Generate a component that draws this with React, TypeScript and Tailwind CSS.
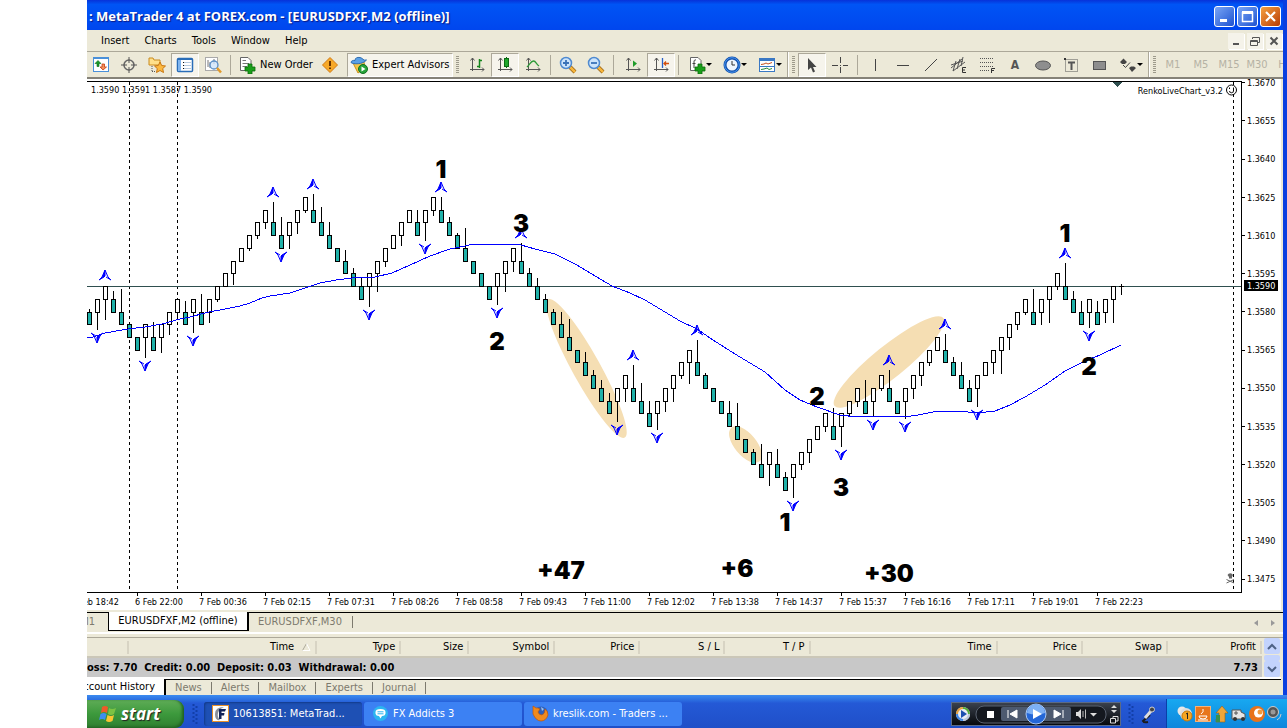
import type { ReactNode } from "react";
import clsx from "clsx";

type Candle = [dir: "u" | "d", top: number, wick?: number];

// dir, level of the body's upper edge (5 pip steps from 1.3590), tip of the wick
const candles: Candle[] = [
  ["d", -2, 309], ["u", -1, 330], ["u", 0, 320], ["d", -1, 291], ["d", -2, 289], ["d", -3], ["d", -4],
  ["u", -3, 358], ["d", -4, 322], ["u", -3, 353], ["u", -2, 335], ["u", -1, 320], ["d", -2, 301],
  ["u", -1, 333], ["d", -2, 294], ["u", -1, 323], ["u", 0, 302], ["u", 1], ["u", 2, 285], ["u", 3],
  ["u", 4, 251], ["u", 5, 239], ["u", 6, 229], ["d", 5, 202], ["d", 4, 217], ["u", 5, 249], ["u", 6, 234],
  ["u", 7, 213], ["d", 6, 194], ["d", 5, 207], ["d", 4, 222], ["d", 3], ["d", 2, 250], ["d", 1, 268],
  ["d", 0, 278], ["u", 1, 307], ["u", 2, 292], ["u", 3, 267], ["u", 4], ["u", 5, 246], ["u", 6],
  ["d", 5, 210], ["u", 6, 241], ["u", 7, 216], ["d", 6, 197], ["d", 5, 217], ["d", 4, 233], ["d", 3, 228],
  ["d", 2], ["d", 1], ["d", 0], ["u", 1, 305], ["u", 2, 292], ["u", 3, 272], ["d", 2, 243], ["d", 1, 268],
  ["d", 0, 278], ["d", -1, 294], ["d", -2, 309], ["d", -3, 312], ["d", -4, 319], ["d", -5], ["d", -6, 352],
  ["d", -7, 370], ["d", -8, 380], ["d", -9, 393], ["u", -8, 422], ["u", -7, 402], ["d", -8, 365],
  ["d", -9, 383], ["d", -10, 401], ["u", -9, 430], ["u", -8, 412], ["u", -7, 402], ["u", -6, 379],
  ["u", -5, 384], ["d", -6, 340], ["d", -7, 373], ["d", -8], ["d", -9], ["d", -10, 401], ["d", -11, 403],
  ["d", -12], ["d", -13, 449], ["d", -14, 444], ["u", -13, 486], ["d", -14, 449], ["d", -15, 472],
  ["u", -14, 498], ["u", -13, 470], ["u", -12, 463], ["u", -11], ["u", -10, 432], ["d", -11, 408],
  ["u", -10, 447], ["u", -9, 416], ["u", -8, 407], ["d", -9, 380], ["u", -8, 417], ["u", -7, 391],
  ["d", -8, 370], ["d", -9], ["u", -8, 419], ["u", -7, 399], ["u", -6, 386], ["u", -5, 366], ["u", -4],
  ["d", -5, 334], ["d", -6, 357], ["d", -7, 362], ["d", -8, 380], ["u", -7, 407], ["u", -6], ["u", -5, 374],
  ["u", -4, 374], ["u", -3, 350], ["u", -2, 330], ["u", -1, 315], ["d", -2, 289], ["u", -1, 325],
  ["u", 0, 323], ["u", 1, 290], ["d", 0, 263], ["d", -1, 291], ["d", -2, 301], ["u", -1, 328],
  ["d", -2, 301], ["u", -1, 323], ["u", 0, 323],
];

const fractalsUp = [[105, 275], [273, 192], [313, 184], [441, 187], [521, 233], [633, 355], [697, 330], [889, 360], [945, 324], [1065, 253]];
const fractalsDown = [
  [97, 338], [145, 366], [193, 341], [281, 257], [369, 315], [425, 249], [497, 313], [617, 430], [657, 438],
  [793, 506], [841, 455], [873, 425], [905, 427], [977, 415], [1089, 336],
];

const average =
  "87,337 93,337 105,333 128,329 145,327 162,324 180,319 190,317 209,312 225,309 240,306 250,303 262,298 270,296 290,293 305,288 320,283 336,280 352,278 375,277 392,273 410,265 430,256 450,249 465,246 473,244 515,244 521,245 535,249 555,254 575,264 612,286 630,293 645,300 680,321 697,329 713,340 735,354 765,372 785,390 800,400 817,407 840,415 857,417 877,416 905,417 918,415 938,411 958,411 978,413 995,411 1010,405 1025,397 1045,385 1065,371 1085,361 1100,355 1121,345";

const notes: [string, number, number][] = [
  ["1", 441, 178], ["3", 521, 232], ["2", 497, 350], ["+47", 561, 579], ["+6", 737, 577], ["+30", 889, 582],
  ["2", 817, 405], ["3", 841, 496], ["1", 785, 531], ["1", 1065, 242], ["2", 1089, 375],
];

const times = [
  "6 Feb 18:42", "6 Feb 22:00", "7 Feb 00:36", "7 Feb 02:15", "7 Feb 07:31", "7 Feb 08:26", "7 Feb 08:58",
  "7 Feb 09:43", "7 Feb 11:00", "7 Feb 12:02", "7 Feb 13:38", "7 Feb 14:37", "7 Feb 15:37", "7 Feb 16:16",
  "7 Feb 17:11", "7 Feb 19:01", "7 Feb 22:23",
];

const prices = Array.from({ length: 14 }, (_, i) => (1.367 - i * 0.0015).toFixed(4));

const levelY = (level: number) => Math.floor(286.55 - level * 12.73);

function Chart() {
  return (
    <svg
      viewBox="87 79 1196 531"
      className="block w-full bg-white font-['DejaVu_Sans_Condensed','DejaVu_Sans',sans-serif] text-[9px]"
      role="img"
      aria-label="EURUSDFXF,M2 chart"
    >
      <g fill="#f5deb3">
        <ellipse cx="586.5" cy="368.5" rx="79" ry="14" transform="rotate(61 586.5 368.5)" />
        <ellipse cx="745.5" cy="444.5" rx="22" ry="11" transform="rotate(50 745.5 444.5)" />
        <ellipse cx="889" cy="362" rx="70" ry="16" transform="rotate(-39 889 362)" />
      </g>

      <g shapeRendering="crispEdges">
        <g stroke="#000" strokeDasharray="3 3">
          <path d="M129.500 82V592M177.500 82V592M1233.500 82V592" />
        </g>
        <rect x="87" y="286" width="1154" height="1" fill="#2f4f4f" />

        {candles.map(([dir, level, wick], i) => {
          const x = 89 + i * 8;
          const top = levelY(level);
          const bottom = levelY(level - 1);
          return (
            <g key={i}>
              {wick && dir === "d" && <rect x={x} y={wick} width="1" height={Math.max(top - wick, 0)} />}
              {wick && dir === "u" && <rect x={x} y={bottom} width="1" height={Math.max(wick - bottom, 0)} />}
              <rect x={x - 2} y={top} width="5" height={bottom - top + 1} />
              <rect x={x - 1} y={top + 1} width="3" height={bottom - top - 1} fill={dir === "d" ? "#20b2aa" : "#fff"} />
            </g>
          );
        })}
        <path d="M1121.500 284V295M1119 286.500H1124" stroke="#000" />

        <polyline points={average} fill="none" stroke="#00f" />

        <path d="M87 81.500H1241.500V592.500H87" fill="none" stroke="#000" />
        {prices.map((p, i) => (
          <rect key={p} x="1242" y={Math.floor(82.8 + i * 38.18)} width="3" height="1" />
        ))}
        {times.slice(1).map((t, i) => (
          <rect key={t} x={137 + i * 64} y="593" width="1" height="3" />
        ))}
        <path d="M1112 82H1122L1117 87Z" fill="#2f4f4f" />
        <rect x="1281" y="79" width="2" height="531" fill="#ece9d8" />
      </g>

      <g stroke="#00f">
        {fractalsUp.map(([x, y]) => (
          <g key={`${x}-${y}`} transform={`translate(${x} ${y})`}>
            <path d="M0-5L-3 2L-6 5L-1 2L0 1Z" fill="#00f" />
            <path d="M0-5L3 2L6 5L1 2" fill="none" />
          </g>
        ))}
        {fractalsDown.map(([x, y]) => (
          <g key={`${x}-${y}`} transform={`translate(${x} ${y})`}>
            <path d="M0 5L3-2L6-5L1-2L0-1Z" fill="#00f" />
            <path d="M0 5L-3-2L-6-5L-1-2" fill="none" />
          </g>
        ))}
      </g>

      <text x="91" y="93">1.3590 1.3591 1.3587 1.3590</text>
      <text x="1223" y="94" textAnchor="end">RenkoLiveChart_v3.2</text>
      <g fill="none" stroke="#000">
        <circle cx="1231.500" cy="90" r="5" />
        <path d="M1229 91.500Q1231.500 94 1234 91.500M1229.500 87.500V89M1233.500 87.500V89" />
      </g>
      <g fill="#666" stroke="#666">
        <path d="M1227.500 575A3 3 0 0 1 1233 575L1232 577V578.500H1229V577Z" stroke="none" />
        <path d="M1226.500 579.500L1234 583M1234 579.500L1226.500 583" fill="none" />
      </g>

      {prices.map((p, i) => (
        <text key={p} x="1247" y={Math.round(86 + i * 38.18)}>{p}</text>
      ))}
      <rect x="1244" y="280" width="34" height="11" />
      <text x="1247" y="289" fill="#fff">1.3590</text>
      {times.map((t, i) => (
        <text key={t} x={71 + i * 64} y="605">{t}</text>
      ))}

      <g className="font-['Inter',sans-serif] text-[24px] font-black" textAnchor="middle">
        {notes.map(([label, x, y]) => (
          <text key={`${x}`} x={x} y={y}>{label}</text>
        ))}
      </g>
    </svg>
  );
}

function Icon({ children, size = 18 }: { children: ReactNode; size?: number }) {
  return (
    <svg width={size} height={size} viewBox="0 0 18 18" fill="none" className="shrink-0" aria-hidden="true">
      {children}
    </svg>
  );
}

const Axes = () => (
  <path d="M4.500 2V15M2.500 4.500L4.500 2L6.500 4.500M2 13.500H16M14 11.500L16 13.500L14 15.500" stroke="#555" />
);

const icons = {
  market: (
    <Icon>
      <rect x="1.500" y="1.500" width="15" height="14" fill="#fff" stroke="#4a90d9" />
      <path d="M2 2H16" stroke="#4a90d9" strokeWidth="2" />
      <path d="M3 7.500L6 4.500L9 7.500H7V10.500H5V7.500Z" fill="#1a9a2a" stroke="#0a6a14" strokeWidth=".6" />
      <path d="M8 11L11 14L14.500 11H12.500V8H10V11Z" fill="#f2915b" stroke="#c43c12" strokeWidth=".8" />
    </Icon>
  ),
  target: (
    <Icon>
      <circle cx="9" cy="9" r="5" stroke="#666" strokeWidth="1.500" />
      <path d="M9 1V7M9 11V17M1 9H7M11 9H17" stroke="#555" />
    </Icon>
  ),
  folder: (
    <Icon>
      <path d="M1 2H5L6 4H12V9H1Z" fill="#ffe08a" stroke="#c98a1e" />
      <path d="M4 10V16M4 15.500H8" stroke="#555" strokeDasharray="1 1" />
      <path d="M12 6L13.700 9.500L17.500 10L14.700 12.600L15.500 16.500L12 14.500L8.500 16.500L9.300 12.600L6.500 10L10.300 9.500Z" fill="#fcb940" stroke="#c8760f" />
    </Icon>
  ),
  terminal: (
    <Icon>
      <rect x="1.500" y="2.500" width="15" height="13" rx="1" fill="#fff" stroke="#2a6db8" strokeWidth="1.500" />
      <path d="M2 3.500H16" stroke="#2a6db8" />
      <rect x="2" y="4" width="3" height="11" fill="#7fb4ee" />
      <path d="M7 6.500H15M7 9.500H15M7 12.500H15" stroke="#b8cbe0" />
      <path d="M7 6.500H8M7 9.500H8M7 12.500H8" stroke="#111" />
    </Icon>
  ),
  tester: (
    <Icon>
      <rect x="1.500" y="1.500" width="12" height="13" fill="#fff" stroke="#a9a9a9" />
      <path d="M4 4V11M6 6V12M10 3V8" stroke="#777" />
      <circle cx="10" cy="9" r="4" fill="#cfe4fa" fillOpacity=".8" stroke="#5c8fc7" strokeWidth="1.300" />
      <path d="M13 12L17 16.500" stroke="#e29a2a" strokeWidth="2.500" />
    </Icon>
  ),
  order: (
    <Icon>
      <path d="M2.500 1.500H10L13 4.500V14.500H2.500Z" fill="#fff" stroke="#666" />
      <path d="M4.500 4.500H8M4.500 7.500H11M4.500 10.500H9" stroke="#777" />
      <path d="M10 8H14V11H17V15H14V18H10V15H7V11H10Z" fill="#1a9e1a" stroke="#0b6b0b" strokeWidth=".8" />
    </Icon>
  ),
  warning: (
    <Icon>
      <path d="M9 1.500L16.500 9L9 16.500L1.500 9Z" fill="#f7a928" stroke="#d27a12" />
      <path d="M9 5V10" stroke="#6b3500" strokeWidth="2" />
      <path d="M9 11.500V13" stroke="#6b3500" strokeWidth="2" />
    </Icon>
  ),
  expert: (
    <Icon>
      <path d="M3 7L8 17L15 12L14 6Z" fill="#f5c646" stroke="#c8901c" />
      <path d="M1 6.500C3 8.500 13 8.500 16.500 4C13 5 13 2 10 1.500C7 1 5 2 5 4.500C3 4 1 5 1 6.500Z" fill="#5aa0e6" stroke="#2f6db1" />
      <circle cx="13" cy="13" r="4.500" fill="#27a33a" stroke="#10701f" />
      <path d="M11.500 10.500V15.500L15.500 13Z" fill="#fff" />
    </Icon>
  ),
  bars: (
    <Icon>
      <Axes />
      <path d="M11.500 3V12M11.500 4.500H14M9 10.500H11.500" stroke="#15861c" strokeWidth="1.500" />
    </Icon>
  ),
  candle: (
    <Icon>
      <Axes />
      <path d="M10.500 1V12" stroke="#0a6a14" />
      <rect x="8.500" y="2.500" width="4" height="8" fill="#1fa62b" stroke="#0a6a14" />
    </Icon>
  ),
  line: (
    <Icon>
      <Axes />
      <path d="M3 11C6 8 7 5 9.500 5S12 8 15 10" stroke="#2d9a38" strokeWidth="1.300" />
    </Icon>
  ),
  zoomIn: (
    <Icon>
      <path d="M11 11L16 16" stroke="#9a6212" strokeWidth="4" />
      <path d="M11 11L16 16" stroke="#f5b53c" strokeWidth="2.500" />
      <circle cx="7" cy="7" r="5.500" fill="#cde4fb" stroke="#4f8ad0" strokeWidth="1.500" />
      <path d="M4 7H10M7 4V10" stroke="#3a72b8" strokeWidth="1.800" />
    </Icon>
  ),
  zoomOut: (
    <Icon>
      <path d="M11 11L16 16" stroke="#9a6212" strokeWidth="4" />
      <path d="M11 11L16 16" stroke="#f5b53c" strokeWidth="2.500" />
      <circle cx="7" cy="7" r="5.500" fill="#cde4fb" stroke="#4f8ad0" strokeWidth="1.500" />
      <path d="M4 7H10" stroke="#3a72b8" strokeWidth="1.800" />
    </Icon>
  ),
  scroll: (
    <Icon>
      <Axes />
      <path d="M9 4.500V11L13 7.500Z" fill="#1f9c2a" />
    </Icon>
  ),
  shift: (
    <Icon>
      <Axes />
      <path d="M10.500 2V12" stroke="#2a62c8" strokeWidth="1.300" />
      <path d="M17 7.500H12M14 5.500L12 7.500L14 9.500" stroke="#d4500e" strokeWidth="1.300" />
    </Icon>
  ),
  indicators: (
    <Icon>
      <path d="M2.500 1.500H10L13 4.500V14.500H2.500Z" fill="#fff" stroke="#666" />
      <path d="M8 4C6.500 3.500 6 4.500 6 6V12M4.500 7.500H7.500" stroke="#444" />
      <path d="M10 8H14V11H17V15H14V18H10V15H7V11H10Z" fill="#1a9e1a" stroke="#0b6b0b" strokeWidth=".8" />
    </Icon>
  ),
  clock: (
    <Icon>
      <circle cx="9" cy="9" r="7" fill="#eef4fc" stroke="#0f4fae" strokeWidth="3" />
      <circle cx="9" cy="9" r="7.300" stroke="#4b96ee" />
      <path d="M9 5V9H12" stroke="#333" />
    </Icon>
  ),
  template: (
    <Icon>
      <rect x="1.500" y="2.500" width="15" height="13" fill="#fff" stroke="#3a78c4" />
      <path d="M1 3.500H17" stroke="#3a78c4" strokeWidth="3" />
      <path d="M3 8.500L6 8L8 7L10 8L14 6.500" stroke="#c8501e" />
      <path d="M2 10.500H16" stroke="#3a78c4" />
      <path d="M3 13.500L6 13L9 12L11 13.500L14 12.500" stroke="#2d8a38" />
    </Icon>
  ),
  cursor: (
    <Icon>
      <path d="M5 2V14L8 11.500L10 16.500L12 15.500L10 11H13.500Z" fill="#444" />
    </Icon>
  ),
  cross: (
    <Icon>
      <path d="M9.500 1V7M9.500 11V17M1 9.500H7M12 9.500H17M9 9.500H10" stroke="#444" />
    </Icon>
  ),
  vline: <Icon><path d="M9.500 3V15" stroke="#444" /></Icon>,
  hline: <Icon><path d="M3 9.500H15" stroke="#444" /></Icon>,
  trend: <Icon><path d="M3 15L15 3" stroke="#444" /></Icon>,
  channel: (
    <Icon>
      <path d="M1 12L12 3M3 15L15 6M3 15L6 5M7 13L10 3M11 10L13 1M1 9L13 5" stroke="#555" />
      <path d="M16 11.500H12.500V16.500H16M12.500 14H15" stroke="#333" />
    </Icon>
  ),
  fibo: (
    <Icon>
      <path d="M2 2.500H16M2 6.500H16M2 10.500H16M2 14.500H11" stroke="#555" strokeDasharray="1 1" />
      <path d="M13.500 17V12.500H17M13.500 14.500H16" stroke="#333" />
    </Icon>
  ),
  ellipse: <Icon><ellipse cx="9" cy="9.500" rx="7.500" ry="4.500" fill="#8e8e8e" stroke="#555" /></Icon>,
  rect: <Icon><rect x="3.500" y="5.500" width="12" height="8" fill="#8e8e8e" stroke="#555" /></Icon>,
  label: (
    <Icon>
      <rect x="3.500" y="3.500" width="12" height="12" stroke="#555" strokeDasharray="1 1" />
      <path d="M6 6.500H13M9.500 6V14" stroke="#555" strokeWidth="2" />
      <rect x="2" y="2" width="2" height="2" fill="#333" />
    </Icon>
  ),
  arrows: (
    <Icon>
      <path d="M1 6L4.500 2.500L8 6L6 8H3ZM10 12L13 16L17 12L15 10.500H12Z" fill="#444" />
      <path d="M4 9L6.500 11.500L11 6.500" stroke="#444" />
    </Icon>
  ),
};

function Tool({ name, active, menu }: { name: keyof typeof icons; active?: boolean; menu?: boolean }) {
  return (
    <button
      type="button"
      aria-label={name}
      className={clsx(
        "flex h-6 shrink-0 items-center justify-center",
        menu ? "w-[35px]" : "w-7",
        active && "border border-t-[#aca899] border-l-[#aca899] border-r-white border-b-white bg-[#f6f4ec]",
      )}
    >
      {icons[name]}
      {menu && <span className="border-x-3 border-t-3 border-x-transparent border-t-black" />}
    </button>
  );
}

const Sep = () => <span className="mx-[3px] h-5 w-px shrink-0 bg-[#aca899]" />;

const Grip = () => (
  <span className="mx-[3px] h-[18px] w-[3px] shrink-0 bg-[repeating-linear-gradient(#9d9a8b_0_1px,transparent_1px_2px)]" />
);

const Edge = () => <span className="h-[26px] w-[2px] shrink-0 border-l border-[#aca899] bg-white" />;

function Toolbar() {
  return (
    <div className="flex h-7 items-center overflow-hidden border-t border-[#aca899] border-b-2 border-b-[#858278]">
      <Tool name="market" />
      <Tool name="target" />
      <Tool name="folder" />
      <Tool name="terminal" active />
      <Tool name="tester" />
      <Sep />
      <button type="button" className="flex h-6 w-[82px] shrink-0 items-center gap-1 pl-1 whitespace-nowrap">
        {icons.order}
        New Order
      </button>
      <Tool name="warning" />
      <button
        type="button"
        className="ml-[3px] flex h-6 w-[106px] shrink-0 items-center gap-1 border border-t-[#aca899] border-l-[#aca899] border-r-white border-b-white bg-[#f6f4ec] pl-[2px] whitespace-nowrap"
      >
        {icons.expert}
        Expert Advisors
      </button>
      <Grip />
      <div className="ml-px flex items-center">
        <Tool name="bars" />
        <Tool name="candle" active />
        <Tool name="line" />
      </div>
      <Sep />
      <Tool name="zoomIn" />
      <Tool name="zoomOut" />
      <Sep />
      <div className="ml-[2px] flex items-center">
        <Tool name="scroll" />
        <Tool name="shift" active />
      </div>
      <Sep />
      <Tool name="indicators" menu />
      <Tool name="clock" menu />
      <Tool name="template" menu />
      <Edge />
      <Grip />
      <Tool name="cursor" active />
      <Tool name="cross" />
      <Sep />
      <Tool name="vline" />
      <Tool name="hline" />
      <Tool name="trend" />
      <Tool name="channel" />
      <Tool name="fibo" />
      <button type="button" className="h-6 w-7 shrink-0 text-[12px] font-bold text-[#555]">A</button>
      <Tool name="ellipse" />
      <Tool name="label" />
      <Tool name="rect" />
      <Tool name="arrows" menu />
      <Edge />
      <Grip />
      {["M1", "M5", "M15", "M30", "H1"].map(p => (
        <button key={p} type="button" disabled className="h-6 w-7 shrink-0 text-[#b5b2a4]">{p}</button>
      ))}
    </div>
  );
}

function TitleBar() {
  const box = "flex h-[21px] w-[21px] items-center justify-center rounded-[3px] border border-white";
  return (
    <header className="flex h-[30px] items-center justify-between overflow-hidden bg-linear-to-b from-[#0831d9] via-[#0054f5] via-15% to-[#0046ee] pt-[2px] pr-[2px]">
      <h1 className="pl-[2px] font-['Open_Sans',sans-serif] text-[13px] font-bold whitespace-nowrap text-white [text-shadow:1px_1px_1px_#0a1883]">
        : MetaTrader 4 at FOREX.com - [EURUSDFXF,M2 (offline)]
      </h1>
      <div className="flex gap-[2px]">
        <button type="button" aria-label="Minimize" className={clsx(box, "bg-linear-to-br from-[#7aa5f5] to-[#1e50d0]")}>
          <svg width="13" height="13"><rect x="2" y="9" width="7" height="3" fill="#fff" /></svg>
        </button>
        <button type="button" aria-label="Restore" className={clsx(box, "bg-linear-to-br from-[#7aa5f5] to-[#1e50d0]")}>
          <svg width="13" height="13"><path d="M1.500 2V11.500H11.500V2M1 2.500H12" stroke="#fff" fill="none" strokeWidth="1.500" /><rect x="1" y="1" width="11" height="3" fill="#fff" /></svg>
        </button>
        <button type="button" aria-label="Close" className={clsx(box, "bg-linear-to-br from-[#f5a040] to-[#b83a00]")}>
          <svg width="13" height="13"><path d="M2 2L11 11M11 2L2 11" stroke="#fff" strokeWidth="2.200" /></svg>
        </button>
      </div>
    </header>
  );
}

function MenuBar() {
  const box = "flex h-4 w-4 items-center justify-center bg-[#f5f3ea] shadow-[1px_1px_0_#fff]";
  return (
    <nav className="flex h-[21px] items-center justify-between pr-px pl-[14px]">
      <div className="flex gap-[15px]">
        {["Insert", "Charts", "Tools", "Window", "Help"].map(m => (
          <button key={m} type="button">{m}</button>
        ))}
      </div>
      <div className="flex gap-[3px]">
        <button type="button" aria-label="Minimize chart" className={box}>
          <svg width="10" height="10"><rect x="2" y="7" width="6" height="2" fill="#555" /></svg>
        </button>
        <button type="button" aria-label="Restore chart" className={box}>
          <svg width="10" height="10"><path d="M2.500 3V1.500H9.500V6.500H8M.5 4.500H7.500V9.500H.5ZM.5 5.500H7" stroke="#555" fill="none" /></svg>
        </button>
        <button type="button" aria-label="Close chart" className={box}>
          <svg width="10" height="10"><path d="M1.500 1.500L8.500 8.500M8.500 1.500L1.500 8.500" stroke="#555" strokeWidth="2" /></svg>
        </button>
      </div>
    </nav>
  );
}

function ChartTabs() {
  return (
    <div className="border-b-2 border-b-white pt-[2px]">
      <div className="flex h-5 items-start border-t border-black text-[#7d7a6e]">
        <button type="button" className="w-[21px] overflow-hidden pt-px">
          <span className="float-right pr-[13px]">M1</span>
        </button>
        <button type="button" className="-mt-px h-[19px] w-[141px] border-r-2 border-b border-l border-black bg-white text-black">
          EURUSDFXF,M2 (offline)
        </button>
        <button type="button" className="pt-px pl-[9px]">EURUSDFXF,M30</button>
        <span className="mt-[3px] ml-[10px] h-3 w-px bg-[#7d7a6e]" />
        <div className="ml-auto flex h-full items-center gap-[13px] pr-2">
          <button type="button" aria-label="Scroll tabs left" className="border-y-3 border-r-4 border-y-transparent border-r-[#999]" />
          <button type="button" aria-label="Scroll tabs right" className="border-y-3 border-l-4 border-y-transparent border-l-[#999]" />
        </div>
      </div>
    </div>
  );
}

const columns: [string, string][] = [
  ["", "w-[42px]"], ["Time", "w-[188px]"], ["Type", "w-[84px]"], ["Size", "w-[68px]"], ["Symbol", "w-[86px]"],
  ["Price", "w-[85px]"], ["S / L", "w-[85px]"], ["T / P", "w-[85px]"], ["Time", "w-[187px]"],
  ["Price", "w-[85px]"], ["Swap", "w-[85px]"], ["Profit", "w-[94px]"],
];

function Terminal() {
  return (
    <section className="pt-[3px]">
      <div className="flex border-t border-[#aca899]">
        <table className="w-full table-fixed border-collapse">
          <thead>
            <tr className="h-[19px] border-b-2 border-[#cbc7b8]">
              {columns.map(([name, width], i) => (
                <th key={i} className={clsx(width, "p-0 font-normal")}>
                  <div className="flex h-[13px] items-center justify-end border-r-2 border-[#d8d4c4] pr-1">
                    {name}
                    {i === 1 && (
                      <svg width="9" height="8" className="ml-2"><path d="M.5 7.500L4.500 .5" stroke="#aca899" /><path d="M4.500 .5L8 7.500H.5" stroke="#fff" fill="none" /></svg>
                    )}
                  </div>
                </th>
              ))}
            </tr>
          </thead>
          <tbody>
            <tr className="h-5 bg-[#c8c8c8] font-bold">
              <td colSpan={11} className="p-0 whitespace-pre">oss: 7.70  Credit: 0.00  Deposit: 0.03  Withdrawal: 0.00</td>
              <td className="p-0 pr-1 text-right">7.73</td>
            </tr>
          </tbody>
        </table>
        <div className="mr-[3px] ml-[2px] flex w-4 shrink-0 flex-col justify-between">
          <button type="button" aria-label="Scroll up" className="flex h-4 items-center justify-center rounded-[2px] bg-[#c3d3fd]">
            <svg width="10" height="7"><path d="M1 6L5 2L9 6" stroke="#4d6185" strokeWidth="2" fill="none" /></svg>
          </button>
          <span className="h-[6px] rounded-[2px] bg-[#c3d3fd]" />
          <button type="button" aria-label="Scroll down" className="flex h-4 items-center justify-center rounded-[2px] bg-[#c3d3fd]">
            <svg width="10" height="7"><path d="M1 1L5 5L9 1" stroke="#4d6185" strokeWidth="2" fill="none" /></svg>
          </button>
        </div>
      </div>
      <div className="mr-[2px] flex h-[18px] items-center border-t-2 border-t-white text-[#7d7a6e]">
        <button type="button" className="flex h-full w-[79px] items-center justify-end overflow-hidden border-r-2 border-black bg-white pr-[9px] whitespace-nowrap text-black">
          Account History
        </button>
        <div className="flex h-full flex-1 items-center border-t border-black">
          {["News", "Alerts", "Mailbox", "Experts", "Journal"].map(t => (
            <button key={t} type="button" className="flex items-center pl-[9px]">
              {t}
              <span className="ml-[9px] h-3 w-px bg-[#7d7a6e]" />
            </button>
          ))}
        </div>
      </div>
    </section>
  );
}

const TaskGrip = () => (
  <svg width="6" height="20" className="shrink-0" aria-hidden="true">
    <path d="M1.500 0V20M4.500 2V20" stroke="#123fa8" strokeWidth="2" strokeDasharray="2 2" />
  </svg>
);

function Player() {
  return (
    <div className="flex h-6 w-[170px] shrink-0 items-center border border-[#5b6a85] bg-linear-to-b from-[#3a414d] to-[#07090d]">
      <svg width="168" height="22" viewBox="0 0 168 22" aria-label="Windows Media Player" role="img">
        <circle cx="11" cy="11" r="7" fill="#e8edf5" />
        <path d="M11 4A7 7 0 0 0 4 11H6A5 5 0 0 1 11 6Z" fill="#e8a03a" />
        <path d="M11 4A7 7 0 0 1 18 11H16A5 5 0 0 0 11 6Z" fill="#56ad3b" />
        <path d="M4 11A7 7 0 0 0 11 18V16A5 5 0 0 1 6 11Z" fill="#3c86e8" />
        <path d="M18 11A7 7 0 0 1 11 18V16A5 5 0 0 0 16 11Z" fill="#b9c7dc" />
        <path d="M9 7V15L15 11Z" fill="#1b4fb0" />
        <rect x="24" y="3" width="130" height="17" rx="8" fill="#14181f" stroke="#5a6270" />
        <rect x="49" y="4" width="70" height="14" rx="2" fill="#4d5a70" />
        <rect x="35" y="8" width="7" height="7" fill="#fff" />
        <path d="M56 7V15M65 7V15L58 11ZM111 7V15M102 7V15L109 11Z" fill="#fff" stroke="#fff" />
        <circle cx="84" cy="11" r="10" fill="#2467d8" stroke="#a9c8f6" />
        <path d="M75 10A9 9 0 0 1 93 10Q84 13 75 10Z" fill="#7db0f5" />
        <path d="M81 6V16L90 11Z" fill="#fff" />
        <path d="M124 9H126L129 6V16L126 13H124Z" fill="#ddd" />
        <path d="M131 8V14M133.500 6.500V15.500" stroke="#bbb" />
        <path d="M138 10H145L141.500 13.500Z" fill="#ddd" />
        <path d="M159 5L162 2L165 5ZM159 7L162 10L165 7Z" fill="#ddd" />
        <path d="M158.500 15.500H163.500V20H158.500ZM161 15V13.500H166V18H164" stroke="#ddd" fill="none" />
      </svg>
    </div>
  );
}

function Taskbar() {
  const task = "flex h-6 w-[158px] shrink-0 items-center gap-1 rounded-[3px] pl-2 text-white whitespace-nowrap";
  return (
    <footer className="flex h-[33px] items-center bg-linear-to-b from-[#3c8cf0] via-[#2459d6] via-25% to-[#1f4fc8] pt-1">
      <button
        type="button"
        className="flex h-7 w-[97px] shrink-0 items-center gap-1 rounded-r-[9px] bg-linear-to-b from-[#5eac56] via-[#3c993c] to-[#2f7f30] pl-[10px] shadow-[inset_-2px_-1px_3px_#1f5f20]"
      >
        <svg width="20" height="20" viewBox="0 0 20 20" aria-hidden="true">
          <path d="M5 3Q8 1 11 3L10 9Q7 7 4 9Z" fill="#f05a28" />
          <path d="M12 4Q15 6 19 4L17 10Q14 12 11 10Z" fill="#7cc243" />
          <path d="M3.500 10Q6.500 8 9.500 10L8 16Q5 14 2 16Z" fill="#3e8ef0" />
          <path d="M10.500 11Q14 13 17 11L15.500 17Q12 19 9 17Z" fill="#fbc531" />
        </svg>
        <span className="font-['Open_Sans',sans-serif] text-[17px] font-bold text-white italic [text-shadow:1px_1px_1px_#222]">start</span>
      </button>
      <span className="w-2" />
      <TaskGrip />
      <div className="ml-[6px] flex gap-[2px]">
        <button type="button" className={clsx(task, "bg-[#1e50b4] shadow-[inset_1px_1px_2px_#123a8a]")}>
          <svg width="17" height="17" viewBox="0 0 17 17" aria-hidden="true">
            <rect x=".5" y=".5" width="16" height="16" fill="#fff" stroke="#e8902a" />
            <path d="M12 2Q3 2 3 9T8 15Q5 12 6 8T12 2Z" fill="#8a8f99" />
            <path d="M7 4H14L13 6.500H9.500V8H12.500L12 10.500H9.500V14H7Z" fill="#12245a" />
          </svg>
          10613851: MetaTrad...
        </button>
        <button type="button" className={clsx(task, "bg-[#3c81f3]")}>
          <svg width="17" height="17" viewBox="0 0 17 17" aria-hidden="true">
            <circle cx="8.500" cy="8.500" r="7.500" fill="#2cb5f0" />
            <path d="M3.500 7Q3.500 4 8.500 4T13.500 7V8.500Q13 11 10 11L8.500 13.500L7 11Q4 11 3.500 8.500Z" fill="#fff" />
            <path d="M5.500 6.800H11.500M5.500 8.800H11.500" stroke="#2cb5f0" />
          </svg>
          FX Addicts 3
        </button>
        <button type="button" className={clsx(task, "bg-[#3c81f3]")}>
          <svg width="17" height="17" viewBox="0 0 17 17" aria-hidden="true">
            <circle cx="9" cy="8.500" r="7" fill="#2f5fb8" />
            <path d="M9 2L12 4L10 6Z" fill="#9cc4f0" />
            <path d="M1 1L4 3H6L8 4L6 7Q7 10 10 10Q13 9 13 4Q16 6 16 10Q14 16 9 16T1 9Z" fill="#f08a1d" stroke="#c0560c" strokeWidth=".7" />
          </svg>
          kreslik.com - Traders ...
        </button>
      </div>
      <div className="ml-auto flex h-full shrink-0 items-center">
        <Player />
        <span className="w-[7px]" />
        <TaskGrip />
        <svg width="32" height="20" viewBox="0 0 32 20" aria-hidden="true">
          <path d="M16 11L9 17Q10 19 14 18" stroke="#1a1a1a" strokeWidth="2" fill="none" />
          <path d="M11 14L17 7" stroke="#ddd" strokeWidth="3" />
          <circle cx="18" cy="5.500" r="2.500" fill="#444" stroke="#ccc" />
        </svg>
        <div className="flex h-full w-[121px] items-center overflow-hidden border-l border-[#0a3fa8] bg-linear-to-b from-[#18a8f0] to-[#0f86dc] pl-[10px]">
          <svg width="108" height="18" viewBox="0 0 108 18" aria-label="Notification area" role="img">
            <circle cx="5" cy="6" r="4.500" fill="#e8e8e8" />
            <circle cx="9" cy="9" r="6" fill="#ddd" />
            <circle cx="10" cy="11" r="5" fill="#f5a623" stroke="#c97808" />
            <path d="M9 9L10.500 8V14" stroke="#222" fill="none" />
            <rect x="18.500" y="1.500" width="15" height="15" fill="#e8761c" stroke="#f7b277" />
            <path d="M22 11H30Q30 14 26 14T22 11M24 9Q27 7 26 4M21 15H31" stroke="#fff" fill="none" />
            <path d="M45 1L51 8H48V17H39V14H42V8H39Z" fill="#f0a63a" stroke="#9a6212" strokeWidth=".6" />
            <path d="M39 10H43V17H39Z" fill="#3c8f4a" />
            <path d="M55 5H64V7L68 9V14H55Z" fill="#e5e5e5" stroke="#555" />
            <circle cx="58" cy="14" r="2" fill="#333" />
            <circle cx="66" cy="14" r="2" fill="#333" />
            <path d="M57 8H61M59 6V10" stroke="#555" />
            <circle cx="80" cy="9" r="8" fill="#e8731a" />
            <circle cx="81.500" cy="8" r="4.500" fill="#fff" />
            <circle cx="83" cy="7" r="2.500" fill="#f29a3c" />
            <circle cx="96" cy="7" r="5.500" fill="#555" stroke="#ccc" />
            <circle cx="96" cy="7" r="2.500" fill="#999" />
            <path d="M100 15Q104 13 104 9" stroke="#ccc" fill="none" />
          </svg>
        </div>
      </div>
    </footer>
  );
}

export default function App() {
  return (
    <div className="flex min-h-screen bg-white font-['DejaVu_Sans_Condensed','DejaVu_Sans',sans-serif] text-[11px] leading-4 text-black">
      <div className="w-[87px] shrink-0" />
      <div className="min-w-0 flex-1">
        <div className="border-r-4 border-[#0a3fe0]">
          <TitleBar />
          <div className="bg-[#ece9d8]">
            <MenuBar />
            <Toolbar />
            <Chart />
            <ChartTabs />
            <Terminal />
          </div>
        </div>
        <Taskbar />
      </div>
    </div>
  );
}
